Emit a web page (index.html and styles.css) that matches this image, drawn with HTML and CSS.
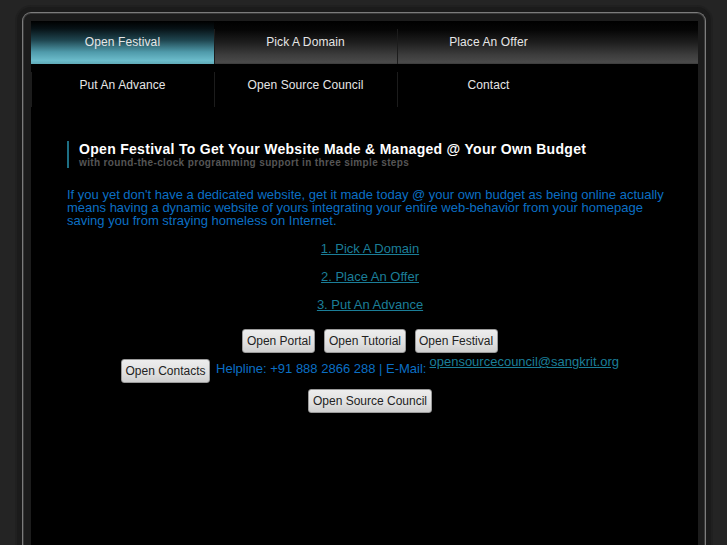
FILE: index.html
```html
<!DOCTYPE html>
<html>
<head>
<meta charset="utf-8">
<title>Open Festival</title>
<link rel="stylesheet" href="styles.css">
</head>
<body>
<div class="shell">
  <div class="screen">
    <ul class="nav">
      <li class="active"><a href="#">Open Festival</a></li>
      <li><a href="#">Pick A Domain</a></li>
      <li><a href="#">Place An Offer</a></li>
      <li><a href="#">Put An Advance</a></li>
      <li><a href="#">Open Source Council</a></li>
      <li><a href="#">Contact</a></li>
    </ul>
    <div class="main">
      <div class="title">
        <h1>Open Festival To Get Your Website Made &amp; Managed @ Your Own Budget</h1>
        <p class="sub">with round-the-clock programming support in three simple steps</p>
      </div>
      <p class="intro">If you yet don't have a dedicated website, get it made today @ your own budget as being online actually means having a dynamic website of yours integrating your entire web-behavior from your homepage saving you from straying homeless on Internet.</p>
      <p class="step"><a href="#">1. Pick A Domain</a></p>
      <p class="step"><a href="#">2. Place An Offer</a></p>
      <p class="step"><a href="#">3. Put An Advance</a></p>
      <div class="row row-first">
        <button class="btn">Open Portal</button>
        <button class="btn">Open Tutorial</button>
        <button class="btn">Open Festival</button>
      </div>
      <div class="row row-contact">
        <button class="btn">Open Contacts</button>
        <span class="helpline">Helpline: +91 888 2866 288 | E-Mail:</span>
        <a class="mail" href="#">opensourcecouncil@sangkrit.org</a>
      </div>
      <div class="row">
        <button class="btn">Open Source Council</button>
      </div>
    </div>
  </div>
</div>
</body>
</html>
```

FILE: styles.css
```css
html, body {
  margin: 0;
  padding: 0;
  height: 100%;
  overflow: hidden;
}
body {
  background: #242424;
  font-family: "Liberation Sans", Arial, sans-serif;
}
.shell {
  margin: 12px 0 0 22px;
  width: 667px;
  padding: 8px 7px 0 8px;
  border: 1px solid #7c7c7c;
  border-bottom: none;
  border-radius: 9px 9px 0 0;
  background: #1c1c1c;
  box-shadow: inset 0 0 0 1px #3a3a3a, 0 0 0 5px #1b1b1b, 0 0 0 7px #202020;
  height: 600px;
}
.screen {
  background: #000;
  height: 600px;
}
.nav {
  list-style: none;
  margin: 0;
  padding: 0;
  display: flex;
  flex-wrap: wrap;
  background: linear-gradient(to bottom, #000 0%, #050505 20%, #1e1e1e 50%, #3c3c3c 78%, #4a4a4a 96%, #3a3a3a 100%) no-repeat;
  background-size: 100% 43px;
}
.nav li {
  position: relative;
  width: 183px;
  height: 43px;
  box-sizing: border-box;
  padding-bottom: 2px;
  display: flex;
  align-items: center;
  justify-content: center;
}
.nav li + li::before {
  content: "";
  position: absolute;
  left: 0;
  top: 8px;
  bottom: 0;
  width: 1px;
  background: #1c1c1c;
}
.nav li.active {
  background: linear-gradient(to bottom, #000 0%, #071216 18%, #1f4650 45%, #4f9aaa 72%, #6cbccb 92%, #5fa9b7 100%);
}
.nav a {
  color: #e6e6e6;
  text-decoration: none;
  font-size: 12px;
  letter-spacing: 0.1px;
}
.main {
  padding: 34px 25px 0 36px;
}
.title {
  border-left: 2px solid #1d6f84;
  padding: 0 0 0 10px;
}
.title h1 {
  margin: 0;
  color: #fff;
  font-size: 14px;
  line-height: 16px;
  font-weight: bold;
  letter-spacing: 0.3px;
}
.title .sub {
  margin: 0;
  color: #555;
  font-size: 10px;
  line-height: 11px;
  font-weight: bold;
  letter-spacing: 0.36px;
}
.intro {
  margin: 20px 0 0;
  color: #0b6fc4;
  font-size: 13px;
  line-height: 13px;
}
.step {
  margin: 15px 0 0;
  text-align: center;
  font-size: 13px;
  line-height: 13px;
}
.step a, .mail {
  color: #1b7e98;
  text-decoration: underline;
}
.row {
  display: flex;
  justify-content: center;
  align-items: flex-start;
  gap: 9px;
  margin-top: 6px;
}
.row-first {
  margin-top: 18px;
}
.btn {
  font-family: "Liberation Sans", Arial, sans-serif;
  font-size: 12px;
  color: #222;
  height: 24px;
  padding: 0 3.5px;
  border: 1px solid #9a9a9a;
  border-radius: 3px;
  background: linear-gradient(to bottom, #ededed 0%, #e0e0e0 60%, #cfcfcf 100%);
}
.row-contact {
  gap: 0;
}
.helpline {
  margin: 3px 3px 0 6px;
  color: #0b6fc4;
  font-size: 13px;
  line-height: 13px;
}
.mail {
  margin-top: -4px;
  font-size: 13px;
  line-height: 13px;
}
```
